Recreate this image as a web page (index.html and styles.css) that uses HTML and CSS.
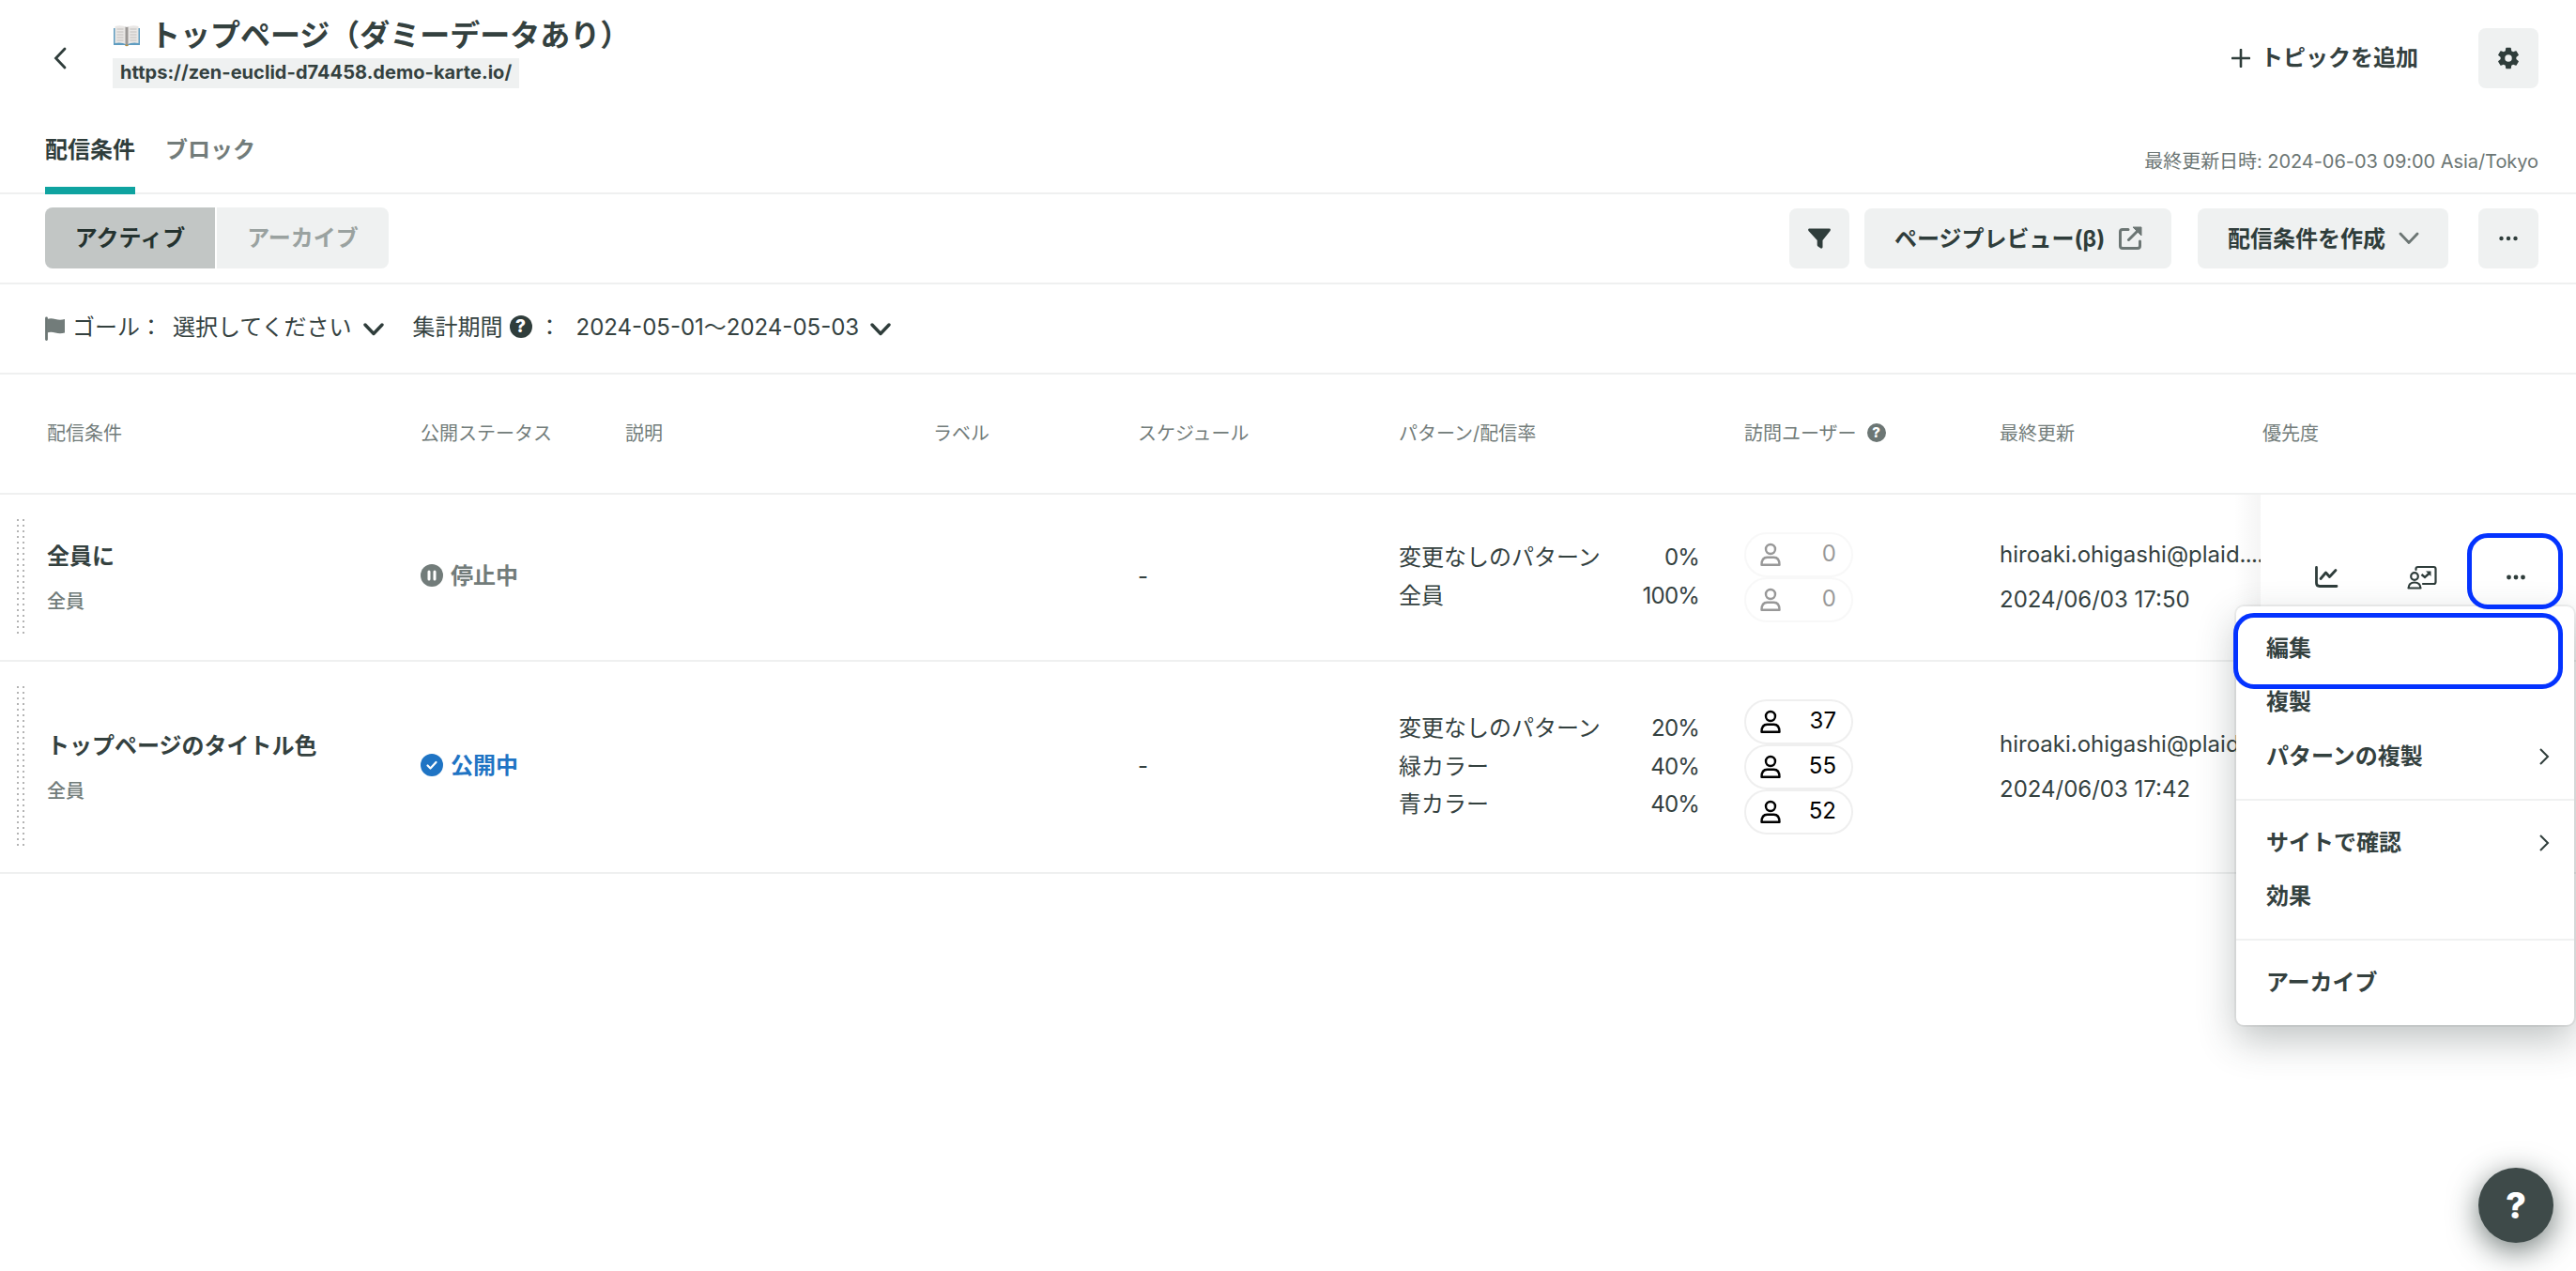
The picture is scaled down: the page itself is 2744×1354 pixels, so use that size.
FILE: index.html
```html
<!DOCTYPE html>
<html lang="ja">

<head>
    <meta charset="UTF-8">
    <title>トップページ（ダミーデータあり）</title>
    <link rel="stylesheet" href="styles.css">
</head>

<body>
    <!-- ヘッダー -->
    <header class="header">
        <a class="back" href="#"><svg width="14" height="24" viewBox="0 0 14 24"><path d="M12 2L2.500 12L12 22" fill="none" stroke="#2f3d3b" stroke-width="2.800" stroke-linecap="round"/></svg></a>
        <div class="heading">
            <h1 class="title">
                <svg class="book" width="28" height="24" viewBox="0 0 28 24">
                    <path d="M0 4h28v18H16l-2 1.500L12 22H0z" fill="#5e9cc0"/>
                    <path d="M1.500 2Q8 0 14 3Q20 0 26.500 2V20Q20 18.500 14 21.500Q8 18.500 1.500 20z" fill="#e9e7e5"/>
                    <path d="M12.500 2.500L14 3L15.500 2.500V21L14 22L12.500 21z" fill="#9b9896"/>
                    <path d="M12.500 21.500h3v1.500h-3z" fill="#b58a3c"/>
                    <path d="M3.500 5h7M3.500 8h7M3.500 11h7M3.500 14h7M3.500 17h7M17.500 5h7M17.500 8h7M17.500 11h7M17.500 14h7M17.500 17h7" stroke="#c2bfbd"/>
                </svg>
                <span>トップページ（ダミーデータあり）</span>
            </h1>
            <span class="url">https://zen-euclid-d74458.demo-karte.io/</span>
        </div>
        <div class="header-actions">
            <a class="add-topic" href="#">
                <svg width="20" height="20" viewBox="0 0 20 20"><path d="M10 1v18M1 10h18" stroke="#2f3d3b" stroke-width="2.600" stroke-linecap="round"/></svg>
                トピックを追加
            </a>
            <button class="btn btn-icon"><svg width="28" height="28" viewBox="0 0 24 24"><path fill="#2f3d3b" d="M19.140 12.940c.04-.3.060-.61.060-.94s-.02-.64-.07-.94l2.030-1.580a.49.49 0 0 0 .12-.61l-1.920-3.320a.49.49 0 0 0-.59-.22l-2.390.96c-.5-.38-1.030-.7-1.620-.94l-.36-2.540A.48.48 0 0 0 13.920 2.400h-3.840c-.24 0-.43.17-.47.41l-.36 2.540c-.59.24-1.130.57-1.620.94l-2.390-.96a.48.48 0 0 0-.59.22L2.740 8.870a.48.48 0 0 0 .12.61l2.030 1.580c-.05.3-.09.63-.09.94s.02.64.07.94l-2.030 1.580a.49.49 0 0 0-.12.61l1.920 3.320c.12.22.37.29.59.22l2.390-.96c.5.38 1.030.7 1.620.94l.36 2.540c.05.24.24.41.48.41h3.840c.24 0 .44-.17.47-.41l.36-2.540c.59-.24 1.130-.56 1.620-.94l2.390.96c.22.080.47 0 .59-.22l1.920-3.320a.48.48 0 0 0-.12-.61zM12 15.200a3.200 3.200 0 1 1 0-6.400 3.200 3.200 0 0 1 0 6.400z"/></svg></button>
        </div>
    </header>

    <!-- タブ -->
    <nav class="tabs">
        <a class="tab tab-active" href="#">配信条件</a>
        <a class="tab" href="#">ブロック</a>
        <span class="updated-at">最終更新日時: 2024-06-03 09:00 Asia/Tokyo</span>
    </nav>

    <!-- ツールバー -->
    <div class="toolbar">
        <div class="segment">
            <button class="segment-item segment-active">アクティブ</button>
            <button class="segment-item">アーカイブ</button>
        </div>
        <div class="toolbar-actions">
            <button class="btn btn-icon btn-filter"><svg width="26" height="22" viewBox="0 0 26 22"><path d="M2 .5h22q1.500.5.5 2.500l-8 10v7.500q-.5 1.500-2 1l-3-2q-.8-.6-.8-1.500V13L1.500 3Q.5 1 2 .5z" fill="#2f3d3b"/></svg></button>
            <button class="btn btn-preview">
                <span class="btn-text">ページプレビュー(β)</span>
                <svg width="26" height="26" viewBox="0 0 26 26"><path d="M11 3.500H5Q2.500 3.500 2.500 6v15q0 2.500 2.500 2.500h16q2.500 0 2.500-2.500v-5M11.500 14.500L21 5" fill="none" stroke="#6c7674" stroke-width="3" stroke-linecap="round"/><path d="M16 1h9v9z" fill="#6c7674" stroke="#6c7674"/></svg>
            </button>
            <button class="btn btn-create">
                <span class="btn-text">配信条件を作成</span>
                <svg width="22" height="14" viewBox="0 0 22 14"><path d="M2 2l9 9.500L20 2" fill="none" stroke="#6c7674" stroke-width="2.800" stroke-linecap="round" stroke-linejoin="round"/></svg>
            </button>
            <button class="btn btn-icon"><svg width="20" height="6" viewBox="0 0 20 6" fill="#2f3d3b"><circle cx="2.500" cy="3" r="2.200"/><circle cx="10" cy="3" r="2.200"/><circle cx="17.500" cy="3" r="2.200"/></svg></button>
        </div>
    </div>

    <!-- 絞り込み -->
    <div class="filters">
        <svg class="flag" width="22" height="26" viewBox="0 0 22 26"><path d="M1.500 2v22.500" stroke="#6c7674" stroke-width="2.800" stroke-linecap="round"/><path d="M2 3q4-1.500 9 0t10 0v14.500q-5 1.500-10 0t-9 0z" fill="#727c7a"/></svg>
        <span class="goal-label">ゴール：</span>
        <span>選択してください</span>
        <svg class="caret" width="22" height="14" viewBox="0 0 22 14"><path d="M2 2l9 9.500L20 2" fill="none" stroke="#2f3d3b" stroke-width="3.400" stroke-linecap="round" stroke-linejoin="round"/></svg>
        <span class="period-label">集計期間</span>
        <span class="help">?</span>
        <span class="colon">：</span>
        <span class="period">2024-05-01〜2024-05-03</span>
        <svg class="caret" width="22" height="14" viewBox="0 0 22 14"><path d="M2 2l9 9.500L20 2" fill="none" stroke="#2f3d3b" stroke-width="3.400" stroke-linecap="round" stroke-linejoin="round"/></svg>
    </div>

    <!-- 配信条件の一覧 -->
    <div class="list">
        <div class="row row-head">
            <div>配信条件</div>
            <div>公開ステータス</div>
            <div>説明</div>
            <div>ラベル</div>
            <div>スケジュール</div>
            <div>パターン/配信率</div>
            <div class="visitors-head">訪問ユーザー <span class="help help-small">?</span></div>
            <div>最終更新</div>
            <div>優先度</div>
        </div>

        <div class="row row-two">
            <span class="handle"></span>
            <div>
                <p class="name">全員に</p>
                <p class="segment-name">全員</p>
            </div>
            <div class="status">
                <svg width="24" height="24" viewBox="0 0 24 24"><circle cx="12" cy="12" r="12" fill="#727c7a"/><path d="M9 8v8M15 8v8" stroke="#fff" stroke-width="3" stroke-linecap="round"/></svg>
                <span class="status-text">停止中</span>
            </div>
            <div></div>
            <div></div>
            <div class="schedule">-</div>
            <div class="patterns">
                <p><span>変更なしのパターン</span><span class="rate">0%</span></p>
                <p><span>全員</span><span class="rate">100%</span></p>
            </div>
            <div class="visitors visitors-empty">
                <span class="pill"><svg width="24" height="26" viewBox="0 0 24 26"><use href="#user"/></svg>0</span>
                <span class="pill"><svg width="24" height="26" viewBox="0 0 24 26"><use href="#user"/></svg>0</span>
            </div>
            <div class="modified">
                <p>hiroaki.ohigashi@plaid<span class="dots">....</span></p>
                <p>2024/06/03 17:50</p>
            </div>
            <div class="row-actions">
                <svg width="26" height="24" viewBox="0 0 26 24"><path d="M2.500 1.500V18q0 3.500 3.500 3.500h18M7 13.500l5.500-6.500 4 4.500L23 4.500" fill="none" stroke="#2f3d3b" stroke-width="2.800" stroke-linecap="round" stroke-linejoin="round"/></svg>
                <svg width="32" height="26" viewBox="0 0 32 26"><path d="M9.500 5V4q0-2 2-2h17q2 0 2 2v14q0 2-2 2H17M1.500 24.500q.5-6 6.500-6t6.500 6z" fill="none" stroke="#2f3d3b" stroke-width="2.200" stroke-linecap="round" stroke-linejoin="round"/><circle cx="8" cy="12" r="3.800" fill="none" stroke="#2f3d3b" stroke-width="2.200"/><path d="M15.500 10l3.500 3L24 8.500" fill="none" stroke="#2f3d3b" stroke-width="2.400"/><path d="M20 6.500h5.500V12z" fill="#2f3d3b"/></svg>
                <span class="more"><svg width="20" height="6" viewBox="0 0 20 6" fill="#2f3d3b"><circle cx="2.500" cy="3" r="2.400"/><circle cx="10" cy="3" r="2.400"/><circle cx="17.500" cy="3" r="2.400"/></svg></span>

                <ul class="menu">
                    <li class="menu-item menu-current">編集</li>
                    <li class="menu-item">複製</li>
                    <li class="menu-item">パターンの複製 <svg width="12" height="20" viewBox="0 0 12 20"><path d="M2 2l8 8-8 8" fill="none" stroke="#2f3d3b" stroke-width="2"/></svg></li>
                    <li class="menu-line"></li>
                    <li class="menu-item">サイトで確認 <svg width="12" height="20" viewBox="0 0 12 20"><path d="M2 2l8 8-8 8" fill="none" stroke="#2f3d3b" stroke-width="2"/></svg></li>
                    <li class="menu-item">効果</li>
                    <li class="menu-line"></li>
                    <li class="menu-item">アーカイブ</li>
                </ul>
            </div>
        </div>

        <div class="row row-three">
            <span class="handle"></span>
            <div>
                <p class="name">トップページのタイトル色</p>
                <p class="segment-name">全員</p>
            </div>
            <div class="status status-live">
                <svg width="24" height="24" viewBox="0 0 24 24"><circle cx="12" cy="12" r="12" fill="#1f74c4"/><path d="M7.500 12.500l3 3 6-6.500" fill="none" stroke="#fff" stroke-width="2.200" stroke-linecap="round" stroke-linejoin="round"/></svg>
                <span class="status-text">公開中</span>
            </div>
            <div></div>
            <div></div>
            <div class="schedule">-</div>
            <div class="patterns">
                <p><span>変更なしのパターン</span><span class="rate">20%</span></p>
                <p><span>緑カラー</span><span class="rate">40%</span></p>
                <p><span>青カラー</span><span class="rate">40%</span></p>
            </div>
            <div class="visitors">
                <span class="pill"><svg width="24" height="26" viewBox="0 0 24 26"><use href="#user"/></svg>37</span>
                <span class="pill"><svg width="24" height="26" viewBox="0 0 24 26"><use href="#user"/></svg>55</span>
                <span class="pill"><svg width="24" height="26" viewBox="0 0 24 26"><use href="#user"/></svg>52</span>
            </div>
            <div class="modified">
                <p>hiroaki.ohigashi@plaid<span class="dots">....</span></p>
                <p>2024/06/03 17:42</p>
            </div>
            <div></div>
        </div>
    </div>

    <button class="support">?</button>

    <svg class="defs" width="0" height="0">
        <symbol id="user" viewBox="0 0 24 26">
            <circle cx="12" cy="7" r="5" fill="none" stroke="#000" stroke-width="2.400"/>
            <path d="M2.500 23.800q0-8 6-8h7q6 0 6 8z" fill="none" stroke="#000" stroke-width="2.400" stroke-linejoin="round"/>
        </symbol>
    </svg>
</body>

</html>
```
FILE: styles.css
```css
*, *::before, *::after {
    box-sizing: border-box;
}

body {
    position: relative;
    height: 1354px;
    margin: 0;
    overflow: hidden;
    font-family: Inter, "Noto Sans CJK JP", sans-serif;
    font-size: 24px;
    color: #34413f;
    background-color: #fff;
}

h1, p, ul {
    margin: 0;
    padding: 0;
}

a {
    color: inherit;
    text-decoration: none;
}

svg {
    display: block;
    flex-shrink: 0;
}

button {
    padding: 0;
    border: 0;
    font: inherit;
    font-weight: 700;
    color: #2f3d3b;
}

/* header */
.header {
    display: flex;
    height: 124px;
    padding: 0 40px 0 48px;
}

.back {
    width: 72px;
    padding: 50px 0 0 9px;
}

.heading {
    padding-top: 13px;
}

.title {
    display: flex;
    align-items: center;
    gap: 11px;
    height: 49px;
    padding-left: 1px;
    font-size: 32px;
    line-height: 50px;
}

.url {
    display: block;
    width: max-content;
    height: 32px;
    padding: 0 8px;
    font-size: 20px;
    font-weight: 700;
    line-height: 31px;
    letter-spacing: .04px;
    background-color: #eff1f1;
}

.header-actions {
    display: flex;
    align-items: center;
    gap: 64px;
    height: 64px;
    margin: 30px 0 0 auto;
}

.add-topic {
    display: flex;
    align-items: center;
    gap: 11px;
    font-weight: 700;
    line-height: 36px;
}

.btn {
    display: flex;
    align-items: center;
    height: 64px;
    border-radius: 8px;
    background-color: #eff1f1;
}

.btn-icon {
    justify-content: center;
    width: 64px;
}

.btn-text {
    padding-bottom: 4px;
}

/* tabs */
.tabs {
    display: flex;
    gap: 32px;
    height: 83px;
    padding: 0 40px 0 48px;
    border-bottom: 2px solid #eff0f0;
}

.tab {
    height: 83px;
    font-weight: 700;
    line-height: 72px;
    color: #727c7a;
}

.tab-active {
    color: #2f3d3b;
    border-bottom: 8px solid #0fa3a0;
}

.updated-at {
    margin-left: auto;
    font-size: 20px;
    line-height: 96px;
    letter-spacing: -.05px;
    color: #6c7674;
}

/* toolbar */
.toolbar {
    display: flex;
    align-items: center;
    justify-content: space-between;
    height: 96px;
    padding: 0 40px 0 48px;
    border-bottom: 2px solid #eff0f0;
}

.segment {
    display: flex;
    gap: 2px;
    padding-bottom: 1px;
}

.segment-item {
    width: 183px;
    height: 65px;
    padding-bottom: 5px;
    border-radius: 0 8px 8px 0;
    color: #9aa2a0;
    background-color: #eff1f1;
}

.segment-active {
    width: 181px;
    border-radius: 8px 0 0 8px;
    color: #24322f;
    background-color: #c2c6c5;
}

.toolbar-actions {
    display: flex;
}

.btn-filter {
    margin-right: 16px;
}

.btn-preview {
    justify-content: space-between;
    width: 327px;
    margin-right: 28px;
    padding: 0 31px 0 32px;
}

.btn-create {
    justify-content: space-between;
    width: 267px;
    margin-right: 32px;
    padding: 0 31px 0 32px;
}

/* filters */
.filters {
    display: flex;
    align-items: center;
    height: 96px;
    padding: 0 48px 8px 48px;
    border-bottom: 2px solid #eff0f0;
}

.goal-label {
    width: 107px;
    margin-left: 7px;
}

.flag {
    margin-top: 7px;
}

.caret {
    margin: 9px 0 0 12px;
}

.period-label {
    margin: 0 7px 0 31px;
}

.help {
    width: 24px;
    height: 24px;
    margin-top: 3px;
    border-radius: 50%;
    font-size: 19px;
    font-weight: 800;
    line-height: 24px;
    text-align: center;
    color: #fff;
    background-color: #2f3d3b;
}

.help-small {
    width: 20px;
    height: 20px;
    margin-top: 1px;
    font-size: 15px;
    line-height: 20px;
    background-color: #6c7674;
}

.colon {
    width: 40px;
    margin-left: 7px;
}

/* list */
.row {
    position: relative;
    display: grid;
    grid-template-columns: 398px 218px 328px 218px 278px 368px 272px 280px 334px;
    align-items: center;
    padding-left: 50px;
    border-bottom: 2px solid #eff0f0;
}

.row-head {
    height: 128px;
    padding-bottom: 3px;
    font-size: 20px;
    color: #727c7a;
}

.row-two {
    height: 178px;
    z-index: 1;
}

.row-three {
    height: 226px;
}

/* dotted drag handle, sits in the row's left padding */
.handle {
    position: absolute;
    top: 26px;
    bottom: 28px;
    left: 18px;
    width: 8px;
    background-image:
        linear-gradient(#fff, #fff),
        repeating-linear-gradient(#b4b4b4 0 2px, #fff 2px 6px);
    background-size: 4px 100%, 100% 100%;
    background-position: 2px 0, 0 0;
    background-repeat: no-repeat;
}

.visitors-head {
    display: flex;
    align-items: center;
    gap: 11px;
}

.name {
    font-weight: 700;
    line-height: 54px;
}

.segment-name {
    font-size: 20px;
    font-weight: 500;
    line-height: 42px;
    padding-bottom: 2px;
    color: #727c7a;
}

.status {
    display: flex;
    align-items: center;
    gap: 8px;
    padding-bottom: 4px;
    font-weight: 700;
    color: #727c7a;
}

.status-text {
    padding-bottom: 3px;
}

.status-live {
    color: #1f74c4;
}

.schedule {
    padding-bottom: 4px;
}

.patterns {
    width: 320px;
}

.patterns p {
    display: flex;
    justify-content: space-between;
    line-height: 40.8px;
}

.rate {
    letter-spacing: -.8px;
}

.pill {
    display: flex;
    align-items: center;
    justify-content: space-between;
    width: 116px;
    height: 48px;
    padding: 0 16px 3px 14px;
    border: 2px solid #efefef;
    border-radius: 24px;
    color: #000;
}

.pill svg {
    margin-top: 3px;
}

.visitors-empty {
    opacity: .4;
}

.modified p {
    line-height: 48.5px;
    white-space: nowrap;
}

.dots {
    letter-spacing: -.7px;
}

.row-actions {
    position: relative;
    display: flex;
    align-self: stretch;
    align-items: center;
    margin-left: -2px;
    padding-left: 57px;
    background-color: #fff;
}

.row-actions::before {
    content: "";
    position: absolute;
    top: 0;
    bottom: 0;
    left: -28px;
    width: 28px;
    background-image: linear-gradient(to left, rgba(0, 0, 0, .04), rgba(0, 0, 0, 0));
}

.row-actions > svg + svg {
    margin-left: 73px;
}

.more {
    display: flex;
    align-items: center;
    justify-content: center;
    width: 102px;
    height: 81px;
    margin: -14px 0 0 32px;
    padding: 13px 0 0 2px;
    border: 5px solid #0433ff;
    border-radius: 22px;
    z-index: 2;
}

.menu {
    position: absolute;
    top: 119px;
    left: -26px;
    width: 360px;
    padding: 16px 0;
    border-radius: 8px;
    list-style: none;
    background-color: #fff;
    box-shadow: 0 0 0 2px rgba(0, 0, 0, .05), 0 16px 40px rgba(47, 61, 59, .3);
}

.menu-item {
    position: relative;
    display: flex;
    align-items: center;
    justify-content: space-between;
    height: 57.6px;
    padding: 0 26px 5px 32px;
    font-weight: 700;
}

.menu-item svg {
    margin-top: 5px;
}

.menu-line {
    height: 2px;
    margin: 16px 0;
    background-color: #f0f1f1;
}

/* highlight frame around the current item */
.menu-current::after {
    content: "";
    position: absolute;
    top: -9px;
    left: -3px;
    width: 351px;
    height: 81px;
    border: 5px solid #0433ff;
    border-radius: 22px;
}

.support {
    position: absolute;
    right: 24px;
    bottom: 30px;
    width: 80px;
    height: 80px;
    border-radius: 50%;
    font-size: 38px;
    font-weight: 800;
    color: #fff;
    background-color: #3e4a49;
    box-shadow: 0 8px 32px rgba(36, 50, 47, .65);
}

.defs {
    position: absolute;
}
```
